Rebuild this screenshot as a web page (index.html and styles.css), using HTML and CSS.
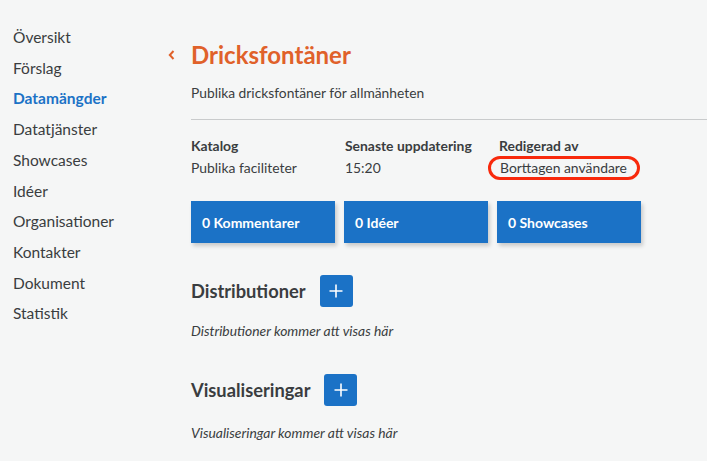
FILE: index.html
```html
<!DOCTYPE html>
<html lang="sv">
<head>
<meta charset="utf-8">
<title>Dricksfontäner</title>
<link rel="stylesheet" href="styles.css">
</head>
<body>
<div class="layout">
  <nav class="sidebar">
    <a class="nav-item">Översikt</a>
    <a class="nav-item">Förslag</a>
    <a class="nav-item active">Datamängder</a>
    <a class="nav-item">Datatjänster</a>
    <a class="nav-item">Showcases</a>
    <a class="nav-item">Idéer</a>
    <a class="nav-item">Organisationer</a>
    <a class="nav-item">Kontakter</a>
    <a class="nav-item">Dokument</a>
    <a class="nav-item">Statistik</a>
  </nav>
  <main class="main">
    <div class="title-row">
      <svg class="back" width="10" height="12" viewBox="0 0 10 12"><path d="M6.5 2 L2.8 6 L6.5 10" fill="none" stroke="#e0612a" stroke-width="2"/></svg>
      <h1 class="title">Dricksfontäner</h1>
    </div>
    <p class="subtitle">Publika dricksfontäner för allmänheten</p>
    <hr class="divider">
    <div class="meta">
      <div class="meta-col">
        <div class="meta-label">Katalog</div>
        <div class="meta-value">Publika faciliteter</div>
      </div>
      <div class="meta-col">
        <div class="meta-label">Senaste uppdatering</div>
        <div class="meta-value">15:20</div>
      </div>
      <div class="meta-col">
        <div class="meta-label">Redigerad av</div>
        <div class="meta-value"><span class="marked">Borttagen användare</span></div>
      </div>
    </div>
    <div class="counters">
      <div class="counter">0 Kommentarer</div>
      <div class="counter">0 Idéer</div>
      <div class="counter">0 Showcases</div>
    </div>
    <section class="section first">
      <div class="section-head">
        <h2 class="section-title">Distributioner</h2>
        <button class="add-btn"><svg width="14" height="14" viewBox="0 0 14 14"><path d="M7 0.5 V13.5 M0.5 7 H13.5" stroke="#fff" stroke-width="1.6"/></svg></button>
      </div>
      <p class="empty">Distributioner kommer att visas här</p>
    </section>
    <section class="section second">
      <div class="section-head">
        <h2 class="section-title">Visualiseringar</h2>
        <button class="add-btn"><svg width="14" height="14" viewBox="0 0 14 14"><path d="M7 0.5 V13.5 M0.5 7 H13.5" stroke="#fff" stroke-width="1.6"/></svg></button>
      </div>
      <p class="empty">Visualiseringar kommer att visas här</p>
    </section>
  </main>
</div>
</body>
</html>
```

FILE: styles.css
```css
* { box-sizing: border-box; }
html, body { margin: 0; padding: 0; }
body {
  background: #f5f6f6;
  font-family: Lato, "Liberation Sans", sans-serif;
  color: #3a3d40;
  width: 707px;
  height: 461px;
  overflow: hidden;
}
.layout { display: flex; }
.sidebar {
  width: 172px;
  flex: none;
  padding: 22px 0 0 13px;
  display: flex;
  flex-direction: column;
}
.nav-item {
  font-size: 15.5px;
  line-height: 30.7px;
  color: #3a3d40;
  text-decoration: none;
}
.nav-item.active { color: #1b72c6; font-weight: 700; }
.main {
  flex: 1;
  padding: 39px 0 0 19px;
}
.title-row {
  display: flex;
  align-items: center;
  margin-left: -24px;
  height: 32px;
}
.back { margin-right: 14px; }
.title {
  margin: 0;
  font-size: 24px;
  font-weight: 700;
  color: #e0612a;
  line-height: 32px;
}
.subtitle {
  margin: 12px 0 0;
  font-size: 13.8px;
  line-height: 20px;
}
.divider {
  margin: 16px 0 0;
  border: 0;
  border-top: 1px solid #c9cbcc;
  height: 0;
}
.meta {
  display: flex;
  margin-top: 16px;
}
.meta-col { width: 154px; }
.meta-label {
  font-size: 13.9px;
  font-weight: 700;
  line-height: 20px;
}
.meta-value {
  font-size: 13.9px;
  line-height: 20px;
  margin-top: 2px;
}
.marked { position: relative; margin-left: 1px; }
.marked::after {
  content: "";
  position: absolute;
  left: -12px; right: -13px; top: -3px; bottom: -4px;
  border: 3px solid #f8290c;
  border-radius: 14px;
}
.counters {
  display: flex;
  gap: 9px;
  margin-top: 23px;
}
.counter {
  width: 144px;
  height: 42px;
  background: #1b72c6;
  color: #fff;
  font-size: 14px;
  font-weight: 700;
  display: flex;
  align-items: center;
  padding-left: 11px;
  box-shadow: 2px 3px 4px rgba(0,0,0,0.18);
}
.section.first { margin-top: 32px; }
.section.second { margin-top: 33px; }
.section-head {
  display: flex;
  align-items: center;
  height: 32px;
}
.section-title {
  margin: 0;
  font-size: 18.3px;
  font-weight: 700;
  line-height: 32px;
}
.add-btn {
  width: 33px;
  height: 32px;
  margin-left: 14px;
  border: 0;
  border-radius: 3px;
  background: #1b72c6;
  display: flex;
  align-items: center;
  justify-content: center;
  padding: 0;
}
.empty {
  margin: 14px 0 0;
  font-size: 13.9px;
  font-style: italic;
  line-height: 20px;
}
.second .empty { margin-top: 17px; }
```
